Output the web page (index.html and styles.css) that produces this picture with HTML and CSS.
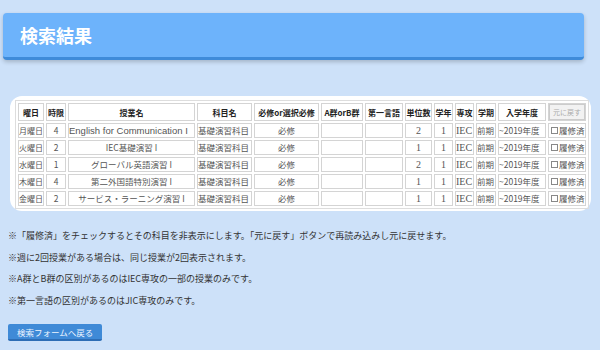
FILE: index.html
```html
<!DOCTYPE html>
<html lang="ja">
<head>
    <meta charset="UTF-8">
    <title>検索結果</title>
    <link rel="stylesheet" href="styles.css">
</head>
<body>

<div class="header">
    <h1>検索結果</h1>
</div>

<div class="card">
    <table class="result">
        <tr>
            <th class="c-day">曜日</th>
            <th class="c-period">時限</th>
            <th class="c-name">授業名</th>
            <th class="c-subject">科目名</th>
            <th class="c-req">必修or選択必修</th>
            <th class="c-group">A群orB群</th>
            <th class="c-lang">第一言語</th>
            <th class="c-unit">単位数</th>
            <th class="c-year">学年</th>
            <th class="c-major">専攻</th>
            <th class="c-term">学期</th>
            <th class="c-entry">入学年度</th>
            <th class="c-btn"><button class="reset">元に戻す</button></th>
        </tr>
        <tr>
            <td class="day">月曜日</td><td class="center">4</td><td class="latin">English for Communication I</td><td>基礎演習科目</td><td class="center">必修</td><td></td><td></td>
            <td class="center serif">2</td><td class="center serif">1</td><td class="serif">IEC</td><td>前期</td><td>~2019年度</td>
            <td><label><input type="checkbox">履修済</label></td>
        </tr>
        <tr>
            <td class="day">火曜日</td><td class="center">2</td><td class="center">IEC基礎演習 I</td><td>基礎演習科目</td><td class="center">必修</td><td></td><td></td>
            <td class="center serif">1</td><td class="center serif">1</td><td class="serif">IEC</td><td>前期</td><td>~2019年度</td>
            <td><label><input type="checkbox">履修済</label></td>
        </tr>
        <tr>
            <td class="day">水曜日</td><td class="center">1</td><td class="center">グローバル英語演習 I</td><td>基礎演習科目</td><td class="center">必修</td><td></td><td></td>
            <td class="center serif">2</td><td class="center serif">1</td><td class="serif">IEC</td><td>前期</td><td>~2019年度</td>
            <td><label><input type="checkbox">履修済</label></td>
        </tr>
        <tr>
            <td class="day">木曜日</td><td class="center">4</td><td class="center">第二外国語特別演習 I</td><td>基礎演習科目</td><td class="center">必修</td><td></td><td></td>
            <td class="center serif">1</td><td class="center serif">1</td><td class="serif">IEC</td><td>前期</td><td>~2019年度</td>
            <td><label><input type="checkbox">履修済</label></td>
        </tr>
        <tr>
            <td class="day">金曜日</td><td class="center">2</td><td class="center">サービス・ラーニング演習 I</td><td>基礎演習科目</td><td class="center">必修</td><td></td><td></td>
            <td class="center serif">1</td><td class="center serif">1</td><td class="serif">IEC</td><td>前期</td><td>~2019年度</td>
            <td><label><input type="checkbox">履修済</label></td>
        </tr>
    </table>
</div>

<div class="notes">
    <p>※「履修済」をチェックするとその科目を非表示にします。「元に戻す」ボタンで再読み込みし元に戻せます。</p>
    <p>※週に2回授業がある場合は、同じ授業が2回表示されます。</p>
    <p>※A群とB群の区別があるのはIEC専攻の一部の授業のみです。</p>
    <p>※第一言語の区別があるのはJIC専攻のみです。</p>
</div>

<button class="back">検索フォームへ戻る</button>

</body>
</html>
```

FILE: styles.css
```css
body {
    margin: 0;
    padding: 13px 9px 0 3px;
    background-color: #cde1f9;
    font-family: "Liberation Sans", "Noto Sans CJK JP", sans-serif;
    color: #333;
}
.header {
    height: 44px;
    margin-right: 7px;
    background-color: #6db3fb;
    border-bottom: 3px solid #3f8bd9;
    border-radius: 4px;
    box-shadow: 0 2px 4px rgba(0,0,0,0.2);
    display: flex;
    align-items: center;
    padding-left: 17px;
}
.header h1 {
    margin: 0;
    font-size: 18px;
    color: #fff;
    font-family: "Noto Sans CJK JP", sans-serif;
    font-weight: bold;
}
.card {
    margin: 36px 0 0 7px;
    background-color: #fff;
    border-radius: 12px;
    padding: 4px 5px 2px 5px;
}
.result {
    border: 1px solid #ddd;
    border-spacing: 2px;
    color: #555;
    width: 571px;
    table-layout: fixed;
}
.result th, .result td {
    border: 1px solid #d4d4d4;
    height: 13px;
    padding: 0;
    white-space: nowrap;
    overflow: hidden;
    line-height: 13px;
    font-family: "Noto Sans CJK JP", sans-serif;
    font-size: 8.5px;
}
.result th {
    font-weight: bold;
    color: #222;
    text-align: center;
    height: 15px;
    font-size: 8px;
}
.result .day {
    font-size: 8px;
}
.result .center {
    text-align: center;
}
.result .latin {
    font-family: "Liberation Sans", "Noto Sans CJK JP", sans-serif;
    font-size: 9.5px;
}
.result .serif {
    font-family: "Liberation Serif", "Noto Sans CJK JP", serif;
    font-size: 10px;
}
.c-day { width: 24px; }
.c-period { width: 18px; }
.c-name { width: 125px; }
.c-subject { width: 53px; }
.c-req { width: 63px; }
.c-group { width: 40px; }
.c-lang { width: 36px; }
.c-unit { width: 25px; }
.c-year { width: 17px; }
.c-major { width: 17px; }
.c-term { width: 18px; }
.c-entry { width: 46px; }
.c-btn { width: 36px; }
.reset {
    font-size: 7px;
    color: #aaa;
    background-color: #f2f2f2;
    border: 1px solid #ccc;
    padding: 2px 3px;
    margin: 0;
    font-family: "Noto Sans CJK JP", sans-serif;
}
.result label {
    display: flex;
    align-items: center;
}
.result input {
    appearance: none;
    width: 7px;
    height: 7px;
    margin: 0 1px 0 2px;
    border: 1px solid #888;
    background-color: #fff;
}
.notes {
    margin: 19px 0 0 5px;
}
.notes p {
    margin: 0 0 9.5px;
    font-size: 9px;
    line-height: 12px;
    font-family: "Noto Sans CJK JP", sans-serif;
    color: #333;
}
.back {
    margin: 8px 0 0 5px;
    padding: 0 9px;
    height: 17px;
    background-color: #3f8ad7;
    color: #eef5ff;
    border: none;
    border-bottom: 2px solid #2d6db5;
    border-radius: 2px;
    font-size: 8.5px;
    font-family: "Noto Sans CJK JP", sans-serif;
}
```
